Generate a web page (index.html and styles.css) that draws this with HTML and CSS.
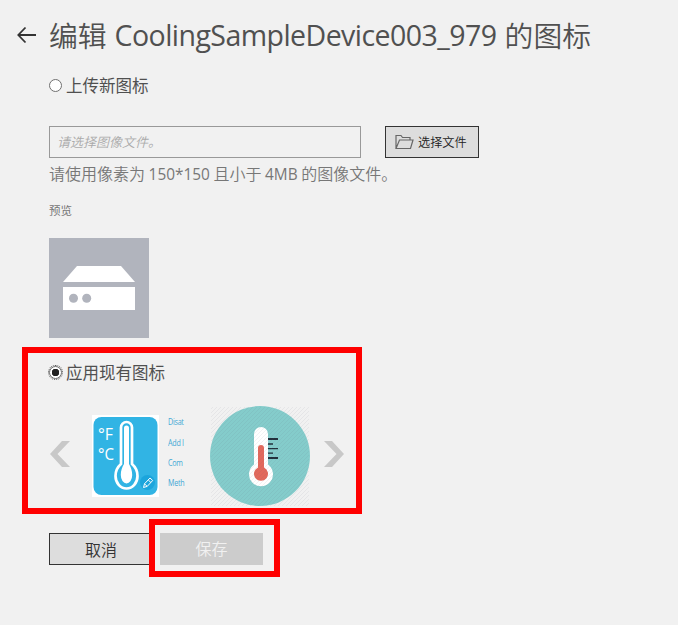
FILE: index.html
```html
<!DOCTYPE html>
<html lang="zh-CN">
<head>
<meta charset="utf-8">
<title>编辑图标</title>
<link rel="stylesheet" href="styles.css">
</head>
<body>
<main class="page">
  <header class="header">
    <svg class="back" viewBox="0 0 20 18" width="20" height="18"><path d="M20 9H2.500M9.500 1.500L2.300 9l7.200 7.500" fill="none" stroke="#333" stroke-width="1.800"/></svg>
    <h1 class="title"><span>编辑</span><span class="device">CoolingSampleDevice003_979</span><span>的图标</span></h1>
  </header>
  <label class="option"><span class="radio"></span>上传新图标</label>
  <div class="upload">
    <div class="field">请选择图像文件。</div>
    <button class="choose">
      <svg viewBox="0 0 19 16" width="19" height="16"><path d="M1 14.500V1.500h5l1.500 2h7.500v2.500M1 14.500L4.500 6H18l-2.500 8.500z" fill="none" stroke="#666" stroke-width="1.200"/></svg>
      <span>选择文件</span>
    </button>
  </div>
  <p class="hint">请使用像素为 <span class="latin">150*150</span> 且小于 <span class="latin">4MB</span> 的图像文件。</p>
  <p class="caption">预览</p>
  <svg class="preview" viewBox="0 0 100 100" width="100" height="100">
    <rect width="100" height="100" fill="#b1b4bd"/>
    <path d="M28 28h44l14 16H14zM14 49h72v23H14z" fill="#fff"/>
    <circle cx="24.500" cy="60.200" r="4.500" fill="#b1b4bd"/><circle cx="37.700" cy="60.200" r="4.500" fill="#b1b4bd"/>
  </svg>
  <section class="existing">
    <label class="option"><span class="radio checked"></span>应用现有图标</label>
    <div class="carousel">
      <svg class="prev" viewBox="0 0 20 26" width="20" height="26"><path d="M12 0h8L7.500 13 20 26h-8L0 13z" fill="#c8c8c8"/></svg>
      <svg class="tile" viewBox="0 0 67 82" width="67" height="82">
        <rect width="67" height="82" fill="#fff"/>
        <rect x="1.500" y="2" width="64" height="78" rx="8" fill="#31b4e4"/>
        <path d="M29 12.500a5.500 5.500 0 0 1 11 0V49c3.500 3 5.500 7 5.500 12a11 12.500 0 0 1-22 0c0-5 2-9 5.500-12z" fill="#31b4e4" stroke="#fff" stroke-width="2.700"/>
        <path d="M32 13a2.500 2.500 0 0 1 5 0v36c2 3 3.200 7 3.200 11a5.700 8.500 0 0 1-11.400 0c0-4 1.200-8 3.200-11z" fill="#fff"/>
        <text class="unit" x="6" y="25" textLength="15" lengthAdjust="spacingAndGlyphs">°F</text>
        <text class="unit" x="6" y="45" textLength="16" lengthAdjust="spacingAndGlyphs">°C</text>
        <circle cx="55.500" cy="67.500" r="7.500" fill="#1ba5dc"/>
        <path d="M51.500 72.500l1-3.700 5.500-5.800 2.700 2.500-5.500 5.900zM56.300 65l2.600 2.500M52.500 68.800l2.700 2.600" fill="none" stroke="#fff"/>
      </svg>
      <ul class="commands"><li>Disat</li><li>Add I</li><li>Com</li><li>Meth</li></ul>
      <svg class="round" viewBox="0 0 100 101" width="100" height="101">
        <defs><pattern id="hatch" width="4" height="4" patternUnits="userSpaceOnUse"><path d="M-1 1L1-1M0 4L4 0M3 5L5 3" stroke="#667" stroke-opacity=".14" stroke-width=".6"/></pattern></defs>
        <ellipse cx="50" cy="50" rx="50" ry="50" fill="#84cccb"/>
        <path d="M44 28a7 7 0 0 1 14 0v30.500a12 12 0 1 1-14 0z" fill="#fff"/>
        <path d="M48 42q0-3 3-3t3 3v19.500a7 7 0 1 1-6 0z" fill="#e2695c"/>
        <path d="M58 33h10M58 52h10" stroke="#22303c" stroke-width="2"/>
        <path d="M58 38h5M58 42.700h10M58 47.200h5" stroke="#22303c" stroke-width="1.300"/>
        <rect x="1" y="1" width="98" height="99" fill="url(#hatch)"/>
      </svg>
      <svg class="next" viewBox="0 0 20 26" width="20" height="26"><path d="M8 0H0l12.500 13L0 26h8l12-13z" fill="#c8c8c8"/></svg>
    </div>
  </section>
  <footer class="actions">
    <button class="cancel">取消</button>
    <div class="highlight"><button class="save" disabled>保存</button></div>
  </footer>
</main>
</body>
</html>
```
FILE: styles.css
```css
* { box-sizing: border-box; }
body { margin: 0; background: #f1f1f1; color: #666; font-family: "Open Sans", "Noto Sans CJK SC", sans-serif; }
h1, p, ul { margin: 0; padding: 0; font-weight: 400; }
svg { display: block; flex: none; }
button { font: inherit; padding: 0; border-radius: 0; }
.page { height: 625px; padding-left: 49px; overflow: hidden; }
.header { display: flex; align-items: center; height: 71px; margin-left: -33px; }
.back { margin-right: 13px; margin-top: -1px; }
.title { display: flex; align-items: center; height: 40px; margin-top: -2px; color: #505050; font: 350 28.8px/40px "Noto Sans CJK SC", sans-serif; white-space: nowrap; }
.device { width: 382px; margin: 0 8px; font-family: "Open Sans", sans-serif; font-size: 28.5px; font-weight: 400; letter-spacing: -0.55px; }
.option { display: flex; align-items: center; height: 28px; font: 400 16.500px/28px "Noto Sans CJK SC", sans-serif; color: #505050; }
.radio { width: 13px; height: 13px; margin-right: 4px; border: 1px solid #707070; border-radius: 50%; background: #fff; }
.checked { background: radial-gradient(circle, #222 0 3.500px, #fff 4px); }
.existing .radio { outline: 1px dotted #555; }
.upload { display: flex; gap: 24px; height: 32px; margin-top: 27px; }
.field { width: 312px; padding-left: 7px; border: 1px solid #999; color: #aaa; font: italic 350 13px/30px "Noto Sans CJK SC", sans-serif; }
.choose { display: flex; align-items: center; gap: 4px; width: 94px; padding-left: 9px; border: 1px solid #333; background: #ddd; color: #222; font: 350 12.200px/28px "Noto Sans CJK SC", sans-serif; }
.hint { height: 32px; margin-top: -1px; color: #777; font: 350 16px/32px "Noto Sans CJK SC", sans-serif; white-space: nowrap; }
.latin { font-family: "Open Sans", sans-serif; font-size: 15.4px; font-weight: 400; }
.caption { height: 22px; margin-top: 11px; font-size: 11.500px; line-height: 22px; color: #777; }
.preview { margin-top: 16px; }
.existing { width: 340px; height: 167px; margin: 9px 0 0 -27px; padding: 5px 0 0 21px; border: 6px solid #f00; }
.carousel { display: flex; align-items: center; height: 102px; margin-top: 19px; }
.prev { margin: -4px 0 0 1px; }
.tile { margin-left: 22px; }
.commands { width: 18px; margin: -6px 0 0 9px; list-style: none; color: #42a8d5; font: 8.500px/20.400px "Open Sans", sans-serif; letter-spacing: -0.3px; white-space: nowrap; transform: scaleX(.84); transform-origin: left; }
.round { margin-left: 24px; }
.next { margin: -4px 0 0 14px; }
.unit { fill: #fff; font: 16px "Open Sans", sans-serif; }
.actions { display: flex; align-items: center; margin-top: 5px; }
.cancel { width: 100px; height: 32px; margin-top: 2px; padding-left: 3px; border: 1px solid #333; border-right: 0; background: #ddd; color: #333; font: 350 16px/28px "Noto Sans CJK SC", sans-serif; }
.highlight { width: 131px; height: 58px; padding: 8px 0 0 5px; border: 6px solid #f00; }
.save { display: block; width: 103px; height: 32px; padding-bottom: 2px; border: 0; background: #ccc; color: #f1f1f1; font: 350 16px/28px "Noto Sans CJK SC", sans-serif; }
```
